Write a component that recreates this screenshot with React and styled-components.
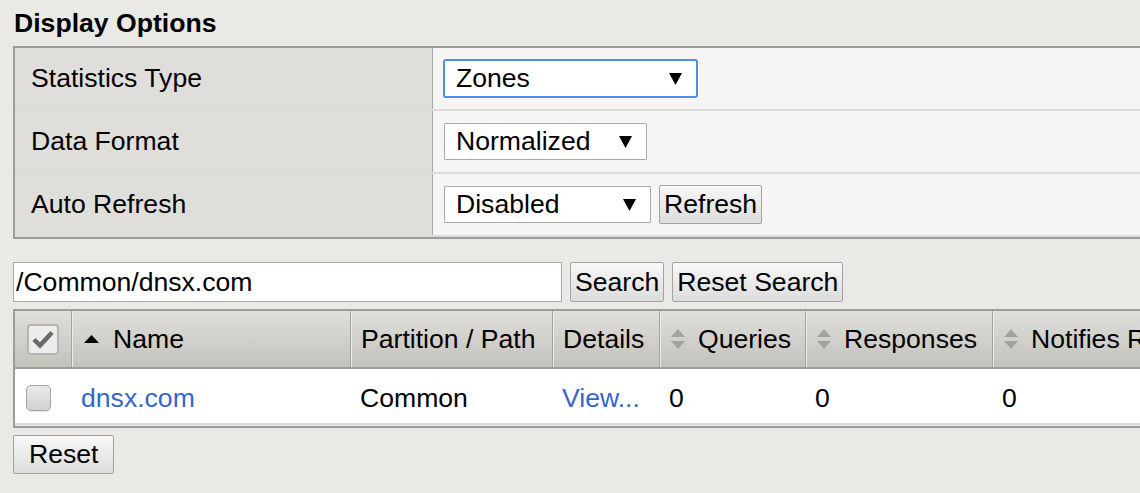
import React from 'react'
import styled, { createGlobalStyle } from 'styled-components'

const GlobalStyle = createGlobalStyle`
  html, body {
    margin: 0;
    padding: 0;
    background: #eae9e5;
  }
  body {
    font-family: "Liberation Sans", Arial, sans-serif;
    font-size: 26.6px;
    color: #000;
  }
`

const Page = styled.div`
  width: 1140px;
  height: 493px;
  overflow: hidden;
  padding-left: 13px;
  box-sizing: border-box;
`

const Title = styled.h2`
  margin: 0;
  height: 46px;
  line-height: 46px;
  font-size: 26.6px;
  font-weight: bold;
  padding-left: 1px;
`

const OptionsTable = styled.div`
  width: 1200px;
  border: 2px solid #9c9c9c;
  border-right: none;
`

const OptionRow = styled.div`
  display: grid;
  grid-template-columns: 418px 1fr;
  height: 63px;
  box-sizing: border-box;
  border-bottom: 2px solid #dcdbd8;
`

const Label = styled.div`
  display: flex;
  align-items: center;
  padding-left: 16px;
  background: #dfdedb;
  border-right: 1px solid #a9a9a9;
  box-shadow: 1px 0 0 #f2f1ef;
`

const Value = styled.div`
  display: flex;
  align-items: center;
  gap: 8px;
  padding-left: 11px;
  background: #f6f5f3;
`

const Select = styled.div`
  display: flex;
  align-items: center;
  box-sizing: border-box;
  width: ${p => p.$width}px;
  height: ${p => (p.$focused ? 39 : 37)}px;
  margin-left: ${p => (p.$focused ? -1 : 0)}px;
  padding: 0 14px 0 11px;
  background: #fff;
  border: ${p => (p.$focused ? '2px solid #4a90e8' : '1px solid #a9a9a9')};
  border-radius: ${p => (p.$focused ? 3 : 1)}px;
  svg {
    margin-left: auto;
  }
`

const Button = styled.button`
  box-sizing: border-box;
  height: ${p => p.$height || 40}px;
  padding: 0 ${p => p.$pad || 4}px;
  font-family: inherit;
  font-size: 26.6px;
  color: #000;
  background: linear-gradient(#f8f8f8, #dcdcdc);
  border: 1px solid #a3a3a3;
  border-radius: 2px;
`

const SearchBar = styled.div`
  display: flex;
  gap: 8px;
  margin-top: 23px;
`

const SearchInput = styled.div`
  box-sizing: border-box;
  width: 549px;
  height: 40px;
  display: flex;
  align-items: center;
  padding: 0 2px;
  background: #fff;
  border: 1px solid #a9a9a9;
`

const DataTable = styled.div`
  margin-top: 7px;
  width: 1300px;
  border: 2px solid #9c9c9c;
  border-right: none;
`

const columns = '56px 279px 202px 107px 146px 187px 323px'

const HeaderRow = styled.div`
  display: grid;
  grid-template-columns: ${columns};
  height: 58px;
  box-sizing: border-box;
  background: linear-gradient(#e0dfdb, #c3c1bc);
  border-bottom: 2px solid #9c9c9c;
`

const HeaderCell = styled.div`
  display: flex;
  align-items: center;
  justify-content: ${p => (p.$center ? 'center' : 'flex-start')};
  gap: 12px;
  padding-left: ${p => (p.$center ? 0 : 10)}px;
  border-left: ${p => (p.$first ? 'none' : '1px solid #a3a3a3')};
  box-shadow: ${p => (p.$first ? 'none' : 'inset 1px 0 0 #ecebe8')};
  white-space: nowrap;
`

const BodyRow = styled.div`
  display: grid;
  grid-template-columns: ${columns};
  height: 56px;
  box-sizing: border-box;
  background: #fff;
  border-bottom: 2px solid #dcdbd8;
  margin-bottom: 1px;
`

const BodyCell = styled.div`
  display: flex;
  align-items: center;
  padding-left: ${p => (p.$first ? 11 : 10)}px;
  padding-top: 4px;
  white-space: nowrap;
`

const Link = styled.a`
  color: #3467c9;
  text-decoration: none;
`

const RowCheckbox = styled.span`
  display: inline-block;
  box-sizing: border-box;
  width: 25px;
  height: 26px;
  border: 1px solid #a5a5a5;
  border-radius: 5px;
  background: linear-gradient(#e9e9e9, #d2d2d2);
  box-shadow: 0 1px 1px rgba(0, 0, 0, 0.1);
`

const Footer = styled.div`
  margin-top: 7px;
`

const Arrow = () => (
  <svg width="13" height="12" viewBox="0 0 13 12">
    <polygon points="0,0 13,0 6.5,12" fill="#000" />
  </svg>
)

const SortUp = () => (
  <svg width="19" height="10" viewBox="0 0 19 10">
    <polygon points="2,9 17,9 9.5,1" fill="#000" />
  </svg>
)

const SortBoth = () => (
  <svg width="16" height="22" viewBox="0 0 16 22">
    <polygon points="1,9 15,9 8,1" fill="#a2a2a0" />
    <polygon points="1,13 15,13 8,21" fill="#a2a2a0" />
  </svg>
)

const CheckedBox = () => (
  <svg width="32" height="31" viewBox="0 0 32 31">
    <rect x="1" y="1" width="30" height="29" rx="3" fill="#ececeb" stroke="#b5b5b3" strokeWidth="2" />
    <path d="M7 15.5 L13 21.5 L25 8.5" fill="none" stroke="#6a6a6a" strokeWidth="4.5" strokeLinejoin="miter" />
  </svg>
)

const options = [
  { label: 'Statistics Type', value: 'Zones', width: 255, focused: true },
  { label: 'Data Format', value: 'Normalized', width: 203 },
  { label: 'Auto Refresh', value: 'Disabled', width: 207, refresh: true },
]

export default function App() {
  return (
    <Page>
      <GlobalStyle />
      <Title>Display Options</Title>

      <OptionsTable>
        {options.map(o => (
          <OptionRow key={o.label}>
            <Label>{o.label}</Label>
            <Value>
              <Select $width={o.width} $focused={o.focused}>
                {o.value}
                <Arrow />
              </Select>
              {o.refresh && <Button $height={39}>Refresh</Button>}
            </Value>
          </OptionRow>
        ))}
      </OptionsTable>

      <SearchBar>
        <SearchInput>/Common/dnsx.com</SearchInput>
        <Button>Search</Button>
        <Button>Reset Search</Button>
      </SearchBar>

      <DataTable>
        <HeaderRow>
          <HeaderCell $first $center>
            <CheckedBox />
          </HeaderCell>
          <HeaderCell>
            <SortUp />
            Name
          </HeaderCell>
          <HeaderCell>Partition / Path</HeaderCell>
          <HeaderCell>Details</HeaderCell>
          <HeaderCell>
            <SortBoth />
            Queries
          </HeaderCell>
          <HeaderCell>
            <SortBoth />
            Responses
          </HeaderCell>
          <HeaderCell>
            <SortBoth />
            Notifies Received
          </HeaderCell>
        </HeaderRow>
        <BodyRow>
          <BodyCell $first>
            <RowCheckbox />
          </BodyCell>
          <BodyCell>
            <Link>dnsx.com</Link>
          </BodyCell>
          <BodyCell>Common</BodyCell>
          <BodyCell>
            <Link>View...</Link>
          </BodyCell>
          <BodyCell>0</BodyCell>
          <BodyCell>0</BodyCell>
          <BodyCell>0</BodyCell>
        </BodyRow>
      </DataTable>

      <Footer>
        <Button $pad={15} $height={39}>Reset</Button>
      </Footer>
    </Page>
  )
}
